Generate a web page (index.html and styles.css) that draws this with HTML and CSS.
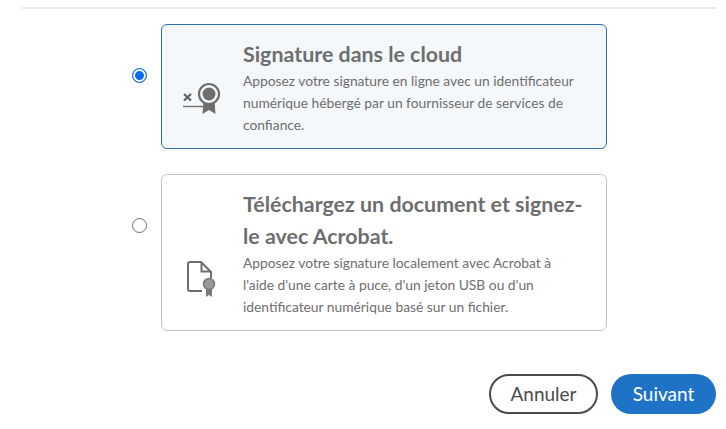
FILE: index.html
```html
<!DOCTYPE html>
<html lang="fr">
<head>
    <meta charset="UTF-8">
    <title>Signature</title>
    <link rel="stylesheet" href="styles.css">
</head>
<body>
<div class="dialog">
    <div class="rule"></div>
    <div class="options">
        <label class="option">
            <span class="radio-col"><input type="radio" name="mode" class="radio" checked></span>
            <div class="card card-active">
                <div class="card-icon">
                    <svg width="40" height="34" viewBox="0 0 40 34">
                        <path d="M3 13l7 6.500M10 13l-7 6.500" fill="none" stroke="#5f5f5f" stroke-width="2.200"/>
                        <path d="M2 25.500h20" stroke="#6e6e6e" stroke-width="1.400"/>
                        <path d="M22.500 20l-1 13 6.500-4 6.500 4-1-13z" fill="#6e6e6e"/>
                        <circle cx="28" cy="13" r="10" fill="#f5f8fb" stroke="#6e6e6e" stroke-width="2.200"/>
                        <circle cx="28" cy="13" r="6.500" fill="#6e6e6e"/>
                    </svg>
                </div>
                <div class="card-text">
                    <h2>Signature dans le cloud</h2>
                    <p>Apposez votre signature en ligne avec un identificateur numérique hébergé par un fournisseur de services de confiance.</p>
                </div>
            </div>
        </label>
        <label class="option">
            <span class="radio-col"><input type="radio" name="mode" class="radio"></span>
            <div class="card">
                <div class="card-icon">
                    <svg width="40" height="38" viewBox="0 0 40 38">
                        <path d="M21 32H9a2 2 0 0 1-2-2V5a2 2 0 0 1 2-2h11l10 10v6" fill="none" stroke="#6e6e6e" stroke-width="2"/>
                        <path d="M20.500 3v9.500H30" fill="none" stroke="#6e6e6e" stroke-width="2"/>
                        <path d="M25 29v9l3-2 3 2v-9z" fill="#7a7a7a"/>
                        <circle cx="28" cy="25" r="5.500" fill="#9a9a9a" stroke="#7a7a7a" stroke-width="1.500"/>
                    </svg>
                </div>
                <div class="card-text">
                    <h2>Téléchargez un document et signez-le avec Acrobat.</h2>
                    <p>Apposez votre signature localement avec Acrobat à l'aide d'une carte à puce, d'un jeton USB ou d'un identificateur numérique basé sur un fichier.</p>
                </div>
            </div>
        </label>
    </div>
    <div class="actions">
        <button class="btn btn-cancel">Annuler</button>
        <button class="btn btn-next">Suivant</button>
    </div>
</div>
</body>
</html>
```

FILE: styles.css
```css
*{
    padding: 0;
    margin: 0;
    box-sizing: border-box;
}
body{
    background-color: #ffffff;
    font-family: "Lato", "Open Sans", sans-serif;
    color: #6e6e6e;
    overflow: hidden;
}
.dialog{
    width: 726px;
    height: 429px;
    padding: 7px 10px 0 22px;
}
.rule{
    height: 2px;
    background-color: #e8e8e8;
}
.options{
    display: flex;
    flex-direction: column;
    gap: 25px;
    margin-top: 15px;
}
.option{
    display: flex;
    align-items: flex-start;
}
.radio-col{
    width: 139px;
    display: flex;
    justify-content: flex-end;
    padding: 44px 14px 0 0;
}
.radio{
    width: 15px;
    height: 15px;
    appearance: none;
    border: 1px solid #6e6e6e;
    border-radius: 50%;
    background-color: #ffffff;
}
.radio:checked{
    border: 1px solid #0f6fd8;
    background-color: #0a6cf5;
    box-shadow: inset 0 0 0 2px #ffffff;
}
.card{
    width: 446px;
    display: flex;
    border: 1px solid #c4c4c4;
    border-radius: 6px;
    background-color: #ffffff;
    padding: 13px 22px 12px 0;
}
.card-active{
    border-color: #2d6fae;
    background-color: #f5f8fb;
}
.card-icon{
    width: 81px;
    flex: none;
    display: flex;
    align-items: flex-end;
    padding: 0 0 21px 19px;
}
.card-text h2{
    font-size: 21.400px;
    line-height: 32px;
    font-weight: 700;
    color: #6e6e6e;
}
.card-text p{
    font-size: 13.800px;
    line-height: 22px;
    color: #6e6e6e;
}
.actions{
    display: flex;
    justify-content: flex-end;
    gap: 13px;
    margin-top: 43px;
}
.btn{
    height: 40px;
    border-radius: 20px;
    font-family: inherit;
    font-size: 19px;
    padding-bottom: 2px;
}
.btn-cancel{
    width: 109px;
    border: 2px solid #4b4b4b;
    background-color: #ffffff;
    color: #4b4b4b;
}
.btn-next{
    width: 105px;
    border: none;
    background-color: #1f73c7;
    color: #ffffff;
}
```
